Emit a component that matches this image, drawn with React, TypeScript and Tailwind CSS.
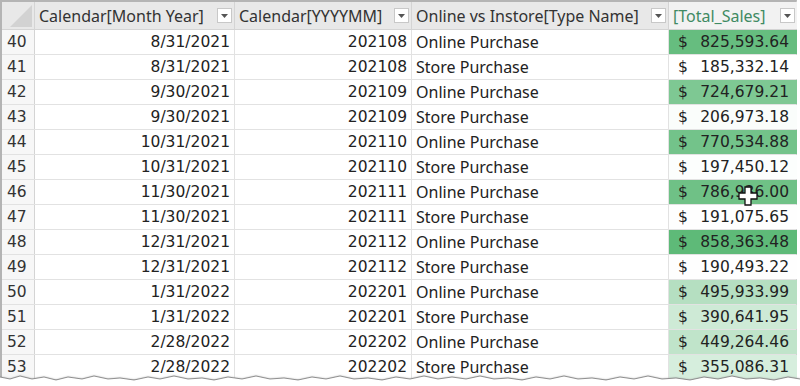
import React from "react";

const rows = [
  { n: 40, date: "8/31/2021", ym: "202108", type: "Online Purchase", sales: 825593.64 },
  { n: 41, date: "8/31/2021", ym: "202108", type: "Store Purchase", sales: 185332.14 },
  { n: 42, date: "9/30/2021", ym: "202109", type: "Online Purchase", sales: 724679.21 },
  { n: 43, date: "9/30/2021", ym: "202109", type: "Store Purchase", sales: 206973.18 },
  { n: 44, date: "10/31/2021", ym: "202110", type: "Online Purchase", sales: 770534.88 },
  { n: 45, date: "10/31/2021", ym: "202110", type: "Store Purchase", sales: 197450.12 },
  { n: 46, date: "11/30/2021", ym: "202111", type: "Online Purchase", sales: 786936.0 },
  { n: 47, date: "11/30/2021", ym: "202111", type: "Store Purchase", sales: 191075.65 },
  { n: 48, date: "12/31/2021", ym: "202112", type: "Online Purchase", sales: 858363.48 },
  { n: 49, date: "12/31/2021", ym: "202112", type: "Store Purchase", sales: 190493.22 },
  { n: 50, date: "1/31/2022", ym: "202201", type: "Online Purchase", sales: 495933.99 },
  { n: 51, date: "1/31/2022", ym: "202201", type: "Store Purchase", sales: 390641.95 },
  { n: 52, date: "2/28/2022", ym: "202202", type: "Online Purchase", sales: 449264.46 },
  { n: 53, date: "2/28/2022", ym: "202202", type: "Store Purchase", sales: 355086.31 },
];

const MIN = 185332.14;
const MAX = 858363.48;

// white -> green color scale, like Excel conditional formatting
const scale = (v: number) => {
  const t = Math.max(0, Math.min(1, (v - MIN) / (MAX - MIN)));
  const mix = (a: number, b: number) => Math.round(a + (b - a) * t);
  return `rgb(${mix(255, 94)}, ${mix(255, 186)}, ${mix(255, 120)})`;
};

const fmt = (v: number) =>
  v.toLocaleString("en-US", { minimumFractionDigits: 2, maximumFractionDigits: 2 });

const Dropdown = () => (
  <div className="w-[15px] h-[15px] bg-white border border-[#c8c8c8] flex items-center justify-center shrink-0">
    <svg width="7" height="4" viewBox="0 0 7 4">
      <path d="M0 0 L7 0 L3.5 4 Z" fill="#555" />
    </svg>
  </div>
);

const cols = "grid grid-cols-[33px_200px_177px_257px_128px]";
const num = "font-['DejaVu_Sans',sans-serif] text-[15.5px]";

const edge =
  "M0 3 L10 5 L20 2 L32 5 L44 3 L56 6 L68 3 L82 5 L94 2 L108 5 L120 4 L134 6 L148 3 L160 5 L174 2 L188 5 L202 4 L214 6 L228 3 L242 5 L256 2 L270 5 L284 4 L298 6 L312 3 L326 5 L340 2 L354 5 L368 4 L382 6 L396 3 L410 5 L424 2 L438 5 L452 3 L466 5 L480 2 L494 5 L508 4 L522 6 L536 3 L550 5 L564 2 L578 5 L592 4 L606 6 L620 3 L634 5 L648 2 L662 5 L676 4 L690 6 L704 3 L718 5 L732 2 L746 5 L760 4 L774 6 L788 3 L800 5";

const App = () => {
  return (
    <div className="relative w-[800px] h-[386px] overflow-hidden bg-white font-['Noto_Sans',sans-serif] text-[16px] text-[#222]">
      <div className="border-t-2 border-l-2 border-[#b4b4b4] w-[797px] border-r border-r-[#d0d0d0]">
        {/* Header */}
        <div className={`${cols} h-[28px] bg-[#e8e8e8] border-b border-[#d4d4d4] text-[#333]`}>
          <div className="relative border-r border-[#d4d4d4] overflow-hidden">
            <svg className="absolute right-[2px] bottom-[2px]" width="22" height="22" viewBox="0 0 22 22">
              <path d="M22 0 L22 22 L0 22 Z" fill="#d2d2d2" />
            </svg>
          </div>
          <div className="flex items-center justify-between pl-[4px] pr-[2px] border-r border-[#d4d4d4]">
            <span>Calendar[Month Year]</span>
            <Dropdown />
          </div>
          <div className="flex items-center justify-between pl-[4px] pr-[2px] border-r border-[#d4d4d4]">
            <span>Calendar[YYYYMM]</span>
            <Dropdown />
          </div>
          <div className="flex items-center justify-between pl-[4px] pr-[2px] border-r border-[#d4d4d4]">
            <span>Online vs Instore[Type Name]</span>
            <Dropdown />
          </div>
          <div className="flex items-center justify-between pl-[4px] pr-[2px] bg-[#f2f2f2] text-[#3f8a63]">
            <span>[Total_Sales]</span>
            <Dropdown />
          </div>
        </div>

        {/* Body */}
        {rows.map((r) => (
          <div key={r.n} className={`${cols} h-[25px] border-b border-[#e2e2e2] leading-[24px]`}>
            <div className={`${num} pl-[5px] bg-[#f7f7f7] border-r border-[#d4d4d4] text-[#333]`}>{r.n}</div>
            <div className={`${num} text-right pr-[4px] border-r border-[#e2e2e2]`}>{r.date}</div>
            <div className={`${num} text-right pr-[4px] border-r border-[#e2e2e2]`}>{r.ym}</div>
            <div className="pl-[4px] border-r border-[#e2e2e2]">{r.type}</div>
            <div
              className={`${num} flex justify-between pl-[9px] pr-[8px]`}
              style={{ backgroundColor: scale(r.sales) }}
            >
              <span>$</span>
              <span>{fmt(r.sales)}</span>
            </div>
          </div>
        ))}
      </div>

      {/* cell cursor */}
      <svg className="absolute left-[738px] top-[186px]" width="20" height="20" viewBox="0 0 20 20">
        <path d="M7 1 H13 V7 H19 V13 H13 V19 H7 V13 H1 V7 H7 Z" fill="#fff" stroke="#111" strokeWidth="1.3" />
      </svg>

      {/* torn paper edge */}
      <svg className="absolute left-0 bottom-0" width="800" height="12" viewBox="0 0 800 12">
        <defs>
          <filter id="sh" x="-5%" y="-50%" width="110%" height="200%">
            <feGaussianBlur stdDeviation="1" />
          </filter>
        </defs>
        <path d={`${edge} L800 12 L0 12 Z`} fill="#a0a0a0" filter="url(#sh)" />
        <path d={`${edge} L800 12 L0 12 Z`} fill="#ffffff" />
        <path d={edge} fill="none" stroke="#7a7a7a" strokeWidth="0.8" />
      </svg>
    </div>
  );
};

export default App;
